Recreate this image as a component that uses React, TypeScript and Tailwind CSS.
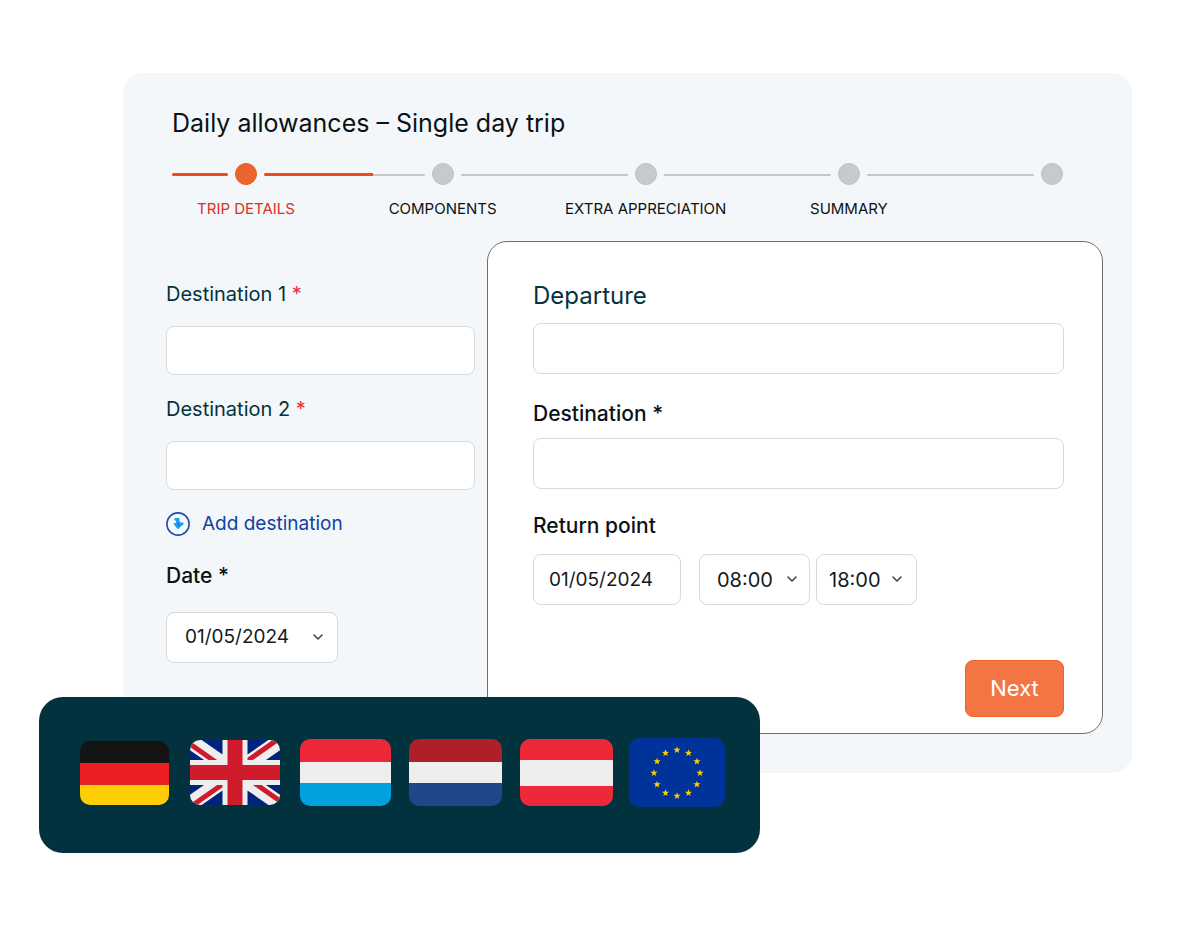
import type { ReactNode } from "react";
import { ChevronDown } from "lucide-react";

type Step = { label: string; grow: string; progress: string };

const steps: Step[] = [
  { label: "COMPONENTS", grow: "flex-[29]", progress: "w-[68%]" },
  { label: "EXTRA APPRECIATION", grow: "flex-[30]", progress: "w-0" },
  { label: "SUMMARY", grow: "flex-[30]", progress: "w-0" },
  { label: "", grow: "flex-[30]", progress: "w-0" },
];

function Stepper() {
  return (
    <ol className="mt-6 flex h-16 items-start text-[15px] leading-6">
      <li aria-current="step" className="flex items-start gap-[7px]">
        <span className="mt-[10px] h-[3px] w-14 rounded-full bg-[#f04a17]" />
        <span className="flex w-[22px] flex-col items-center gap-3 whitespace-nowrap text-[#d9331a]">
          <span className="size-[22px] shrink-0 rounded-full border border-[#ec5a1c] bg-[#e9652c]" />
          <span>TRIP DETAILS</span>
        </span>
      </li>
      {steps.map((step, i) => (
        <li key={i} className={`flex items-start gap-[7px] pl-[7px] ${step.grow}`}>
          <span className="mt-[10px] flex h-[3px] flex-1 items-center overflow-hidden rounded-full">
            <span className={`h-[3px] bg-[#f04a17] ${step.progress}`} />
            <span className="h-[2px] flex-1 bg-[#c3c5c7]" />
          </span>
          <span className="flex w-[22px] flex-col items-center gap-3 whitespace-nowrap text-[#0b1216]">
            <span className="size-[22px] shrink-0 rounded-full border border-[#bfc0c2] bg-[#c8c9cb]" />
            <span>{step.label}</span>
          </span>
        </li>
      ))}
    </ol>
  );
}

function Dropdown({
  id,
  label,
  value,
  className,
  chevron,
}: {
  id: string;
  label?: string;
  value: string;
  className: string;
  chevron: string;
}) {
  return (
    <div className="relative">
      <select
        id={id}
        aria-label={label}
        defaultValue={value}
        className={`block h-[51px] appearance-none rounded-lg border border-[#d6dadd] bg-white text-[#14191c] ${className}`}
      >
        <option>{value}</option>
      </select>
      <ChevronDown
        className={`pointer-events-none absolute top-[17px] size-4 text-[#3c464c] ${chevron}`}
        strokeWidth={2.4}
      />
    </div>
  );
}

function AddIcon() {
  return (
    <svg viewBox="0 0 24 24" className="size-6 shrink-0" aria-hidden="true">
      <circle cx="12" cy="12" r="11.1" fill="#f7fbff" stroke="#2350ae" strokeWidth="1.6" />
      <path
        d="M8.4 6.2 13.2 5.8l.6 4.4 4.2.5-1.2 2.6-1.6.6-2.7 3-1.4-.4-2.4-3-1.4-2.2 2.6-.2-.1-2.5-1.4-.4z"
        fill="#1ba0f0"
      />
      <path d="M12.3 10.4v3.2l1.8-.9" fill="none" stroke="#1470cf" strokeWidth="1" />
    </svg>
  );
}

function Flag({ name, className, viewBox, children }: { name: string; className: string; viewBox: string; children: ReactNode }) {
  return (
    <li className="flex justify-center">
      <svg role="img" aria-label={name} viewBox={viewBox} preserveAspectRatio="none" className={`rounded-[10px] ${className}`}>
        {children}
      </svg>
    </li>
  );
}

function Stripes({ colors, a, b }: { colors: [string, string, string]; a: number; b: number }) {
  return (
    <>
      <rect width="92" height={a} fill={colors[0]} />
      <rect y={a} width="92" height={b - a} fill={colors[1]} />
      <rect y={b} width="92" height={67 - b} fill={colors[2]} />
    </>
  );
}

function starPoints(cx: number, cy: number, r: number) {
  return Array.from({ length: 10 }, (_, i) => {
    const angle = (Math.PI / 5) * i - Math.PI / 2;
    const radius = i % 2 ? r * 0.4 : r;
    return `${(cx + radius * Math.cos(angle)).toFixed(2)},${(cy + radius * Math.sin(angle)).toFixed(2)}`;
  }).join(" ");
}

function Flags() {
  return (
    <ul className="relative -mt-19 grid h-39 w-full max-w-[721px] grid-cols-6 items-center rounded-3xl bg-[#01323d] pr-7 pb-[5px] pl-[30px]">
      <Flag name="Germany" className="h-16 w-[89px]" viewBox="0 0 92 67">
        <Stripes colors={["#141414", "#ed1f24", "#ffcd05"]} a={23} b={46} />
      </Flag>
      <Flag name="United Kingdom" className="h-[65px] w-[90px]" viewBox="0 5 36 26">
        <rect y="5" width="36" height="26" fill="#eee" />
        <path
          fill="#00247d"
          d="M0 9.059V13h5.628zM4.664 31H13v-5.837zM23 25.164V31h8.335zM0 23v3.941L5.63 23zM31.337 5H23v5.837zM36 26.942V23h-5.631zM36 13V9.059L30.371 13zM13 5H4.664L13 10.837z"
        />
        <path
          fill="#cf1b2b"
          d="M25.14 23l9.712 6.801c.471-.479.808-1.082.99-1.749L28.627 23H25.14zM13 23h-2.141l-9.711 6.8c.521.53 1.189.909 1.938 1.085L13 23.943V23zm10-10h2.141l9.711-6.8c-.521-.53-1.188-.909-1.937-1.085L23 12.057V13zm-12.141 0L1.148 6.2C.677 6.68.34 7.282.157 7.949L7.372 13h3.487z"
        />
        <path fill="#cf1b2b" d="M21 15V5h-6v10H0v6h15v10h6V21h15v-6z" />
      </Flag>
      <Flag name="Luxembourg" className="h-[67px] w-[91px]" viewBox="0 0 92 67">
        <Stripes colors={["#ed2939", "#eee", "#00a1de"]} a={23} b={44} />
      </Flag>
      <Flag name="Netherlands" className="h-[67px] w-[93px]" viewBox="0 0 92 67">
        <Stripes colors={["#ae1f28", "#eee", "#20478b"]} a={23} b={44} />
      </Flag>
      <Flag name="Austria" className="h-[67px] w-[93px]" viewBox="0 0 92 67">
        <Stripes colors={["#ed2939", "#eee", "#ed2939"]} a={21} b={47} />
      </Flag>
      <Flag name="European Union" className="h-[69px] w-24" viewBox="0 0 96 69">
        <rect width="96" height="69" fill="#039" />
        {Array.from({ length: 12 }, (_, i) => {
          const angle = (Math.PI / 6) * i;
          return (
            <polygon
              key={i}
              fill="#fc0"
              points={starPoints(48 + 23 * Math.sin(angle), 35 - 23 * Math.cos(angle), 3.8)}
            />
          );
        })}
      </Flag>
    </ul>
  );
}

const textBox = "block w-full rounded-lg border border-[#d6dadd] bg-white px-4 text-[19px] text-[#14191c]";

export default function App() {
  return (
    <main className="min-h-screen bg-white pt-[73px] pr-17 pb-24 pl-[39px] font-['Inter',sans-serif]">
      <section className="ml-21 rounded-[20px] bg-[#f4f7f9] pb-[39px]">
        <header className="pt-[34px] pr-[69px] pl-[49px]">
          <h1 className="text-[25px] leading-8 text-[#0b1216]">Daily allowances – Single day trip</h1>
          <Stepper />
        </header>

        <form className="mt-[14px] flex items-stretch pr-[29px] pl-[43px]" onSubmit={(e) => e.preventDefault()}>
          <div className="mr-3 flex w-[309px] shrink-0 flex-col pt-[41px]">
            <label htmlFor="dest1" className="text-xl leading-6 text-[#04323f]">
              Destination 1 <span className="text-[#ee2a40]">*</span>
            </label>
            <input id="dest1" type="text" className={`mt-5 h-[49px] ${textBox}`} />
            <label htmlFor="dest2" className="mt-[22px] text-xl leading-6 text-[#04323f]">
              Destination 2 <span className="text-[#ee2a40]">*</span>
            </label>
            <input id="dest2" type="text" className={`mt-5 h-[49px] ${textBox}`} />
            <button type="button" className="mt-[22px] flex items-center gap-3 text-[19px] leading-6 text-[#12429f]">
              <AddIcon />
              Add destination
            </button>
            <label htmlFor="date" className="mt-7 text-[21px] leading-6 font-medium text-[#0b1216]">
              Date *
            </label>
            <div className="mt-6 flex">
              <Dropdown id="date" value="01/05/2024" className="w-[172px] pl-[18px] text-[19px]" chevron="right-3" />
            </div>
          </div>

          <div className="flex min-w-0 flex-1 flex-col rounded-[20px] border border-[#6d7073] bg-white pt-[38px] pr-[38px] pb-4 pl-[45px]">
            <label htmlFor="departure" className="text-2xl leading-8 text-[#04323f]">
              Departure
            </label>
            <input id="departure" type="text" className={`mt-[11px] h-[51px] ${textBox}`} />
            <label htmlFor="destination" className="mt-7 text-[21px] leading-6 font-medium text-[#0b1216]">
              Destination *
            </label>
            <input id="destination" type="text" className={`mt-3 h-[51px] ${textBox}`} />
            <label htmlFor="return" className="mt-[25px] text-[21px] leading-6 font-medium text-[#0b1216]">
              Return point
            </label>
            <div className="mt-4 flex">
              <input
                id="return"
                type="text"
                defaultValue="01/05/2024"
                className="h-[51px] w-[148px] rounded-lg border border-[#d6dadd] bg-white pl-[15px] text-[19px] text-[#14191c]"
              />
              <div className="ml-[18px] flex gap-[6px]">
                <Dropdown id="from" label="From" value="08:00" className="w-[111px] pl-[17px] text-xl" chevron="right-[10px]" />
                <Dropdown id="to" label="To" value="18:00" className="w-[101px] pl-3 text-xl" chevron="right-3" />
              </div>
            </div>
            <button
              type="submit"
              className="mt-[55px] h-[57px] w-[99px] self-end rounded-lg border border-[#f2602c] bg-[#f37543] text-[22px] text-white"
            >
              Next
            </button>
          </div>
        </form>
      </section>
      <Flags />
    </main>
  );
}
